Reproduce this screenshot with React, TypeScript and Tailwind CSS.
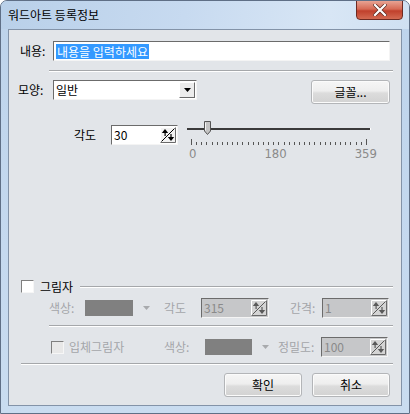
import React from 'react'

const font = { fontFamily: '"Noto Sans CJK KR", "Liberation Sans", sans-serif' }

function Spin({ disabled }: { disabled?: boolean }) {
  const c = disabled ? '#5a5a5a' : '#000'
  return (
    <svg width="16" height="16" viewBox="0 0 16 16" className="shrink-0">
      <rect x="0" y="0" width="16" height="16" fill={disabled ? '#d4d4d4' : '#f2f2f2'} />
      <path d="M0.5 15.5 V0.5 H15.5" fill="none" stroke="#ffffff" />
      <path d="M15.5 0.5 V15.5 H0.5" fill="none" stroke="#6a6a6a" />
      <line x1="1.5" y1="14.5" x2="14.5" y2="1.5" stroke={c} />
      <path d="M5 2 L1.8 6 H8.2 Z" fill={c} />
      <rect x="4.5" y="5.5" width="1.2" height="3.5" fill={c} />
      <path d="M11 14 L7.8 10 H14.2 Z" fill={c} />
      <rect x="10.4" y="7" width="1.2" height="3.5" fill={c} />
    </svg>
  )
}

function Field({ w, value, disabled }: { w: string; value: string; disabled?: boolean }) {
  return (
    <div
      className={`flex items-center h-[20px] border border-t-[#6b6b6b] border-l-[#6b6b6b] border-r-[#f4f4f4] border-b-[#f4f4f4] pl-[2px] pr-[1px] ${w} ${
        disabled ? 'bg-[#c6c7c9] text-[#8a8a8a]' : 'bg-white text-black'
      }`}
    >
      <span className="flex-1 text-[12px] leading-none">{value}</span>
      <Spin disabled={disabled} />
    </div>
  )
}

function Sep({ cls }: { cls: string }) {
  return <div className={`h-[2px] border-t border-t-[#a5a7aa] border-b border-b-white ${cls}`} />
}

function Btn({ label, w }: { label: string; w: string }) {
  return (
    <div
      className={`h-[24px] ${w} flex items-center justify-center rounded-[3px] border border-[#b3b5b8] text-[12px] text-black bg-[linear-gradient(#f6f6f6_0%,#eeeeee_45%,#dcdcdc_55%,#d2d2d2_100%)] shadow-[inset_0_0_0_1px_#fbfbfb]`}
    >
      {label}
    </div>
  )
}

function Check({ disabled }: { disabled?: boolean }) {
  return (
    <div
      className={`w-[13px] h-[13px] shrink-0 border border-t-[#7f7f7f] border-l-[#7f7f7f] border-r-[#f6f6f6] border-b-[#f6f6f6] ${
        disabled ? 'bg-[#e8e8e8]' : 'bg-white'
      }`}
    />
  )
}

export default function App() {
  const ticks = Array.from({ length: 35 })
  return (
    <div className="w-[410px] h-[414px] bg-white" style={font}>
      <div className="w-[410px] h-[414px] flex flex-col rounded-t-[7px] border border-[#5f6f86] bg-[linear-gradient(#bdd3eb,#c5d9ef_60%,#c9dcf0)] overflow-hidden">
        {/* title bar */}
        <div className="relative h-[28px] flex items-center pl-[7px] bg-[linear-gradient(100deg,#b9d0e9_0%,#c7daf0_45%,#d8e6f5_80%,#cfe0f2_100%)]">
          <span className="text-[12px] text-black leading-none">워드아트 등록정보</span>
          <div className="absolute right-[6px] top-[-1px] w-[47px] h-[20px] rounded-b-[4px] border border-[#6d2a22] bg-[linear-gradient(#e8a393_0%,#d66a55_45%,#c0402c_55%,#d36a52_100%)] flex items-center justify-center">
            <svg width="14" height="12" viewBox="0 0 14 12">
              <path d="M2 1 L12 11 M12 1 L2 11" stroke="#5a2a22" strokeWidth="3.6" strokeLinecap="square" />
              <path d="M2 1 L12 11 M12 1 L2 11" stroke="#ffffff" strokeWidth="2.2" strokeLinecap="square" />
            </svg>
          </div>
        </div>

        {/* client area */}
        <div className="mx-[7px] h-[377px] border border-[#8393a8] bg-[#e2e5e9] flex flex-col text-[12px] text-black">
          {/* 내용 */}
          <div className="mt-[11px] flex items-center h-[20px]">
            <span className="ml-[11px] w-[33px]">내용:</span>
            <div className="w-[337px] h-[20px] bg-white border border-t-[#6b6b6b] border-l-[#6b6b6b] border-r-[#f4f4f4] border-b-[#f4f4f4] flex items-center pl-[2px]">
              <span className="bg-[#3399ff] text-white leading-[15px] px-[1px]">내용을 입력하세요</span>
            </div>
          </div>

          <Sep cls="mt-[9px] ml-[40px] mr-[8px]" />

          {/* 모양 */}
          <div className="mt-[8px] flex items-start">
            <span className="ml-[9px] w-[35px] h-[20px] leading-[20px]">모양:</span>
            <div className="w-[144px] h-[20px] bg-white border border-t-[#6b6b6b] border-l-[#6b6b6b] border-r-[#f4f4f4] border-b-[#f4f4f4] flex items-center pl-[2px] pr-[1px]">
              <span className="flex-1 leading-none">일반</span>
              <div className="w-[16px] h-[16px] flex items-center justify-center bg-[#ececec] border border-t-white border-l-white border-r-[#6a6a6a] border-b-[#6a6a6a]">
                <svg width="7" height="4" viewBox="0 0 7 4">
                  <path d="M0 0 H7 L3.5 4 Z" fill="#000" />
                </svg>
              </div>
            </div>
            <div className="ml-auto mr-[11px]">
              <Btn label="글꼴..." w="w-[79px]" />
            </div>
          </div>

          {/* 각도 + slider */}
          <div className="mt-[21px] flex items-start h-[36px]">
            <span className="ml-[65px] w-[37px] h-[20px] leading-[20px]">각도</span>
            <Field w="w-[67px]" value="30" />
            <div className="ml-[9px] w-[184px] flex flex-col">
              <div className="relative h-[8px]">
                <div className="mt-[3px] h-[2px] bg-[#3a3a3a] border-r border-r-white" />
                <div className="absolute left-[17px] top-[-4px]">
                  <svg width="7" height="14" viewBox="0 0 7 14">
                    <path d="M0.5 0.5 H6.5 V10 L3.5 13.5 L0.5 10 Z" fill="#c4c4c4" stroke="#555" />
                    <path d="M1.5 1.5 V9.5" stroke="#f4f4f4" />
                  </svg>
                </div>
              </div>
              <div className="mt-[6px] mx-[4px] flex justify-between items-end h-[6px]">
                {ticks.map((_, i) => (
                  <div
                    key={i}
                    className={`w-px bg-[#555] ${i === 0 || i === ticks.length - 1 ? 'h-[6px]' : 'h-[3px]'}`}
                  />
                ))}
              </div>
              <div
                className="mt-[2px] ml-[2px] mr-[-6px] flex justify-between text-[13px] leading-none text-[#8a8a8a]"
                style={{ fontFamily: '"Liberation Sans Narrow", "DejaVu Sans Condensed", sans-serif' }}
              >
                <span>0</span>
                <span>180</span>
                <span>359</span>
              </div>
            </div>
          </div>

          {/* 그림자 */}
          <div className="mt-[119px] flex items-center h-[13px]">
            <div className="ml-[12px]">
              <Check />
            </div>
            <span className="ml-[6px] leading-none">그림자</span>
            <div className="ml-[7px] mr-[8px] flex-1 h-[2px] border-t border-t-[#a5a7aa] border-b border-b-white" />
          </div>

          <div className="mt-[5px] flex items-center h-[20px] text-[#a4a6a9]">
            <span className="ml-[40px] w-[36px]">색상:</span>
            <div className="w-[48px] h-[16px] bg-[#808080]" />
            <svg width="7" height="4" viewBox="0 0 7 4" className="ml-[10px]">
              <path d="M0 0 H7 L3.5 4 Z" fill="#a8aaad" />
            </svg>
            <span className="ml-[14px] w-[37px]">각도</span>
            <Field w="w-[68px]" value="315" disabled />
            <span className="ml-[21px] w-[32px]">간격:</span>
            <Field w="w-[67px]" value="1" disabled />
          </div>

          <Sep cls="mt-[7px] ml-[40px] mr-[8px]" />

          <div className="mt-[10px] flex items-center h-[20px] text-[#a4a6a9]">
            <div className="ml-[42px]">
              <Check disabled />
            </div>
            <span className="ml-[5px] w-[95px]">입체그림자</span>
            <span className="w-[41px]">색상:</span>
            <div className="w-[47px] h-[16px] bg-[#808080]" />
            <svg width="7" height="4" viewBox="0 0 7 4" className="ml-[10px]">
              <path d="M0 0 H7 L3.5 4 Z" fill="#a8aaad" />
            </svg>
            <span className="ml-[9px] w-[43px]">정밀도:</span>
            <Field w="w-[67px]" value="100" disabled />
          </div>

          <Sep cls="mt-[6px] ml-[12px] mr-[8px]" />

          <div className="mt-[8px] flex justify-end gap-[10px] mr-[11px]">
            <Btn label="확인" w="w-[78px]" />
            <Btn label="취소" w="w-[78px]" />
          </div>
        </div>
      </div>
    </div>
  )
}
